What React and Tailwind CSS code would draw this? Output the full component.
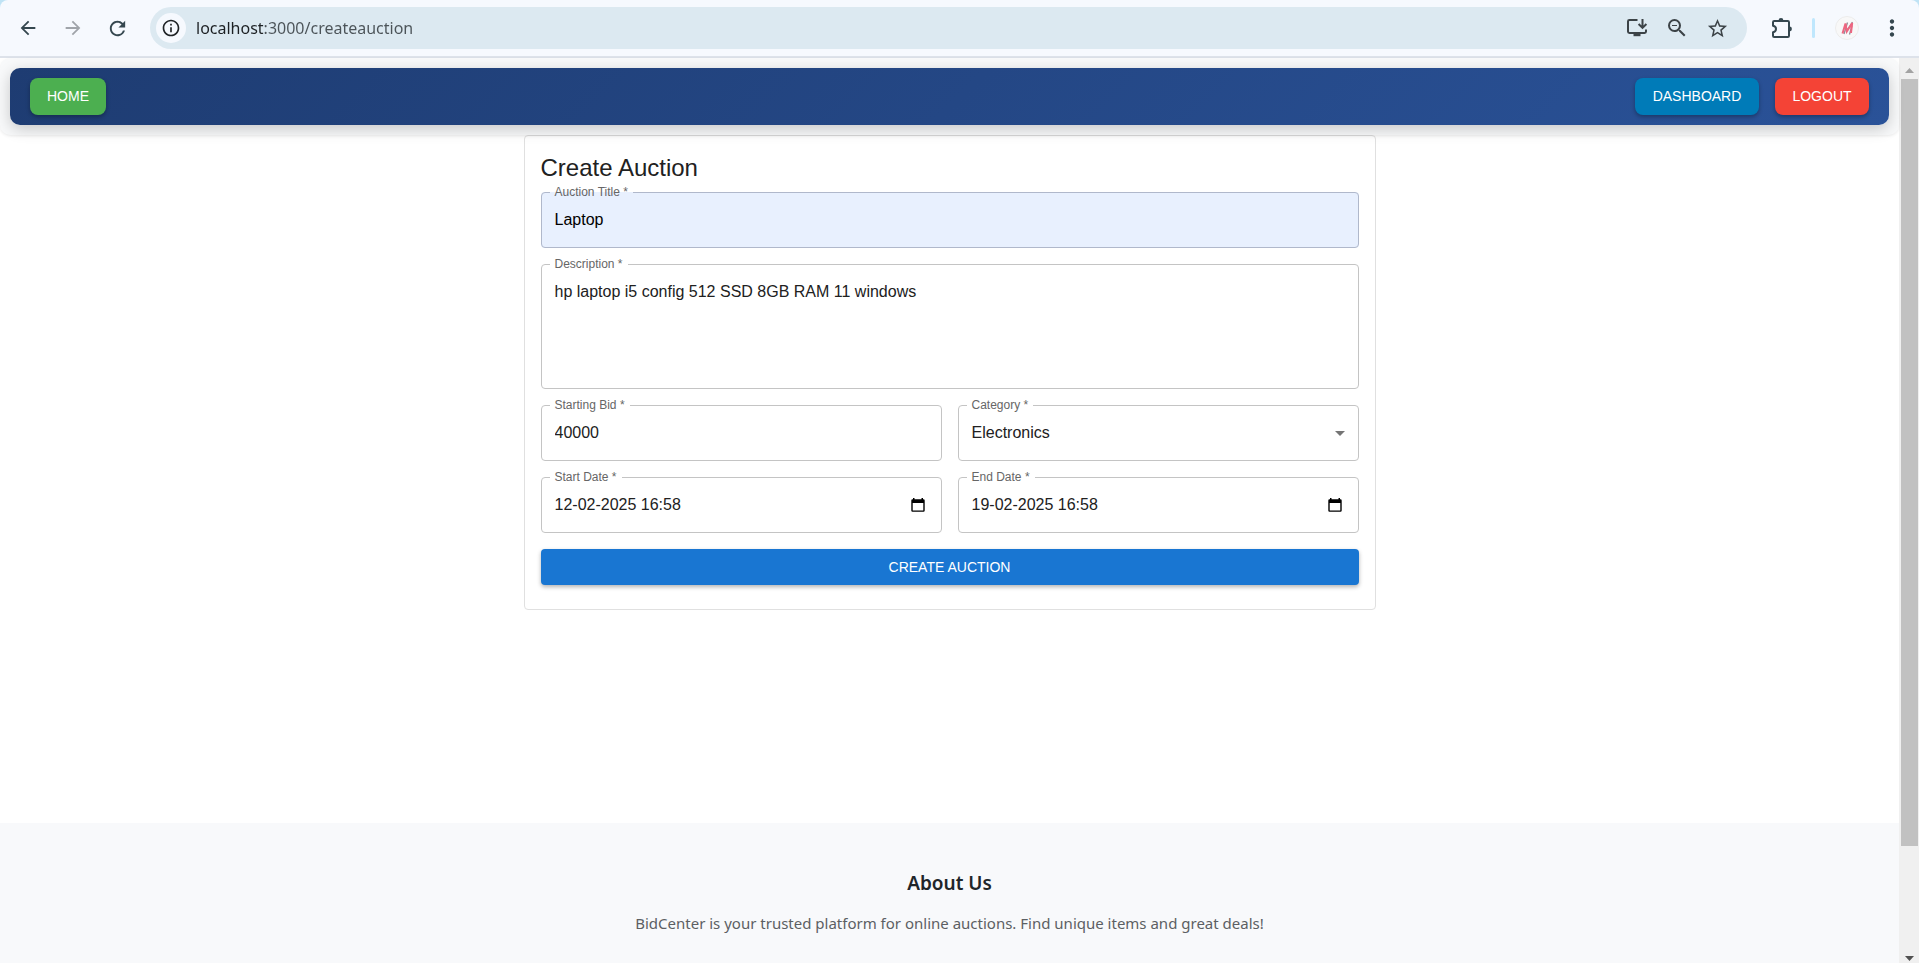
import React from "react";
import {
  MdArrowBack,
  MdArrowForward,
  MdRefresh,
  MdInfoOutline,
  MdZoomOut,
  MdStarBorder,
  MdMoreVert,
} from "react-icons/md";

function InstallIcon() {
  return (
    <svg width="22" height="22" viewBox="0 0 22 22" fill="none" stroke="currentColor" strokeWidth="2" aria-hidden="true">
      <path d="M11.5 3H3.4Q2 3 2 4.4V14.600Q2 16 3.400 16H18.600Q20 16 20 14.600V12.500" />
      <path d="M16.500 2v8.500M12.600 7l3.900 3.900L20.400 7" />
      <path d="M7.500 16h7v3.200h-7z" fill="currentColor" stroke="none" />
    </svg>
  );
}

function PuzzleIcon() {
  return (
    <svg width="24" height="24" viewBox="0 0 24 24" fill="none" stroke="currentColor" strokeWidth="2" strokeLinejoin="round" aria-hidden="true">
      <path d="M4.200 5H17.800Q19 5 19 6.200V19.800Q19 21 17.800 21H4.200Q3 21 3 19.800V16.200C7 15.500 7 10.500 3 9.800V6.200Q3 5 4.200 5Z" />
      <path d="M8.600 4.500a2.400 2.400 0 0 1 4.800 0zM19.500 10.600a2.400 2.400 0 0 1 0 4.800z" fill="currentColor" stroke="none" />
    </svg>
  );
}

function AvatarMark() {
  return (
    <svg width="24" height="24" viewBox="0 0 24 24" fill="none" aria-hidden="true">
      <circle cx="12" cy="12" r="11.500" fill="#f8f8f8" stroke="#ececec" />
      <path d="M9 18l3.500-11.500M11.500 15l6-9M14.500 18.500l2.500-9" stroke="#8f8f98" strokeWidth="1.300" />
      <path d="M7.500 17.500l3-10 1.300 8 5.400-8.500-1.200 10" stroke="#ee6680" strokeWidth="2" />
    </svg>
  );
}

function CalendarIcon() {
  return (
    <svg width="14" height="16" viewBox="0 0 14 16" aria-hidden="true">
      <path
        fillRule="evenodd"
        d="M2 1h1.500v1.200h7V1H12v1.200h.5q1.200 0 1.200 1.200v10.200q0 1.200-1.200 1.200h-11q-1.200 0-1.200-1.200V3.400q0-1.200 1.200-1.200H2zM1.700 6v7.400h10.600V6z"
        fill="#000"
      />
    </svg>
  );
}

function ToolButton({ label, width = "w-[45px]", tone = "text-[#35474f]", children }) {
  return (
    <button type="button" aria-label={label} className={`flex h-10 shrink-0 items-center justify-center ${width} ${tone}`}>
      {children}
    </button>
  );
}

function BrowserBar() {
  return (
    <div className="shrink-0 bg-[#bfe3f5]">
      <div className="flex h-[58px] items-center rounded-t-lg border-b-2 border-[#dde2ea] bg-[#f6f9fe] px-[5px]">
        <ToolButton label="Back"><MdArrowBack size={22} /></ToolButton>
        <ToolButton label="Forward" tone="text-[#a0a4aa]"><MdArrowForward size={22} /></ToolButton>
        <ToolButton label="Reload"><MdRefresh size={23} /></ToolButton>
        <div className="mr-3 ml-2.5 flex h-[42px] min-w-0 flex-1 items-center rounded-full bg-[#dce9f1] pr-2.5 pl-1.5 text-[#3c4347]">
          <button type="button" aria-label="Site information" className="flex size-[30px] shrink-0 items-center justify-center rounded-full bg-[#f6f9fe] text-[#1f2326]">
            <MdInfoOutline size={20} />
          </button>
          <input
            aria-label="Address"
            defaultValue="localhost:3000/createauction"
            className="ml-[10px] block min-w-0 flex-1 bg-linear-to-r from-[#1c2023] from-[68px] to-[#4b5358] to-[68px] bg-clip-text font-['Noto_Sans',sans-serif] text-base leading-6 text-transparent outline-none"
          />
          <ToolButton label="Install app" width="w-10" tone=""><InstallIcon /></ToolButton>
          <ToolButton label="Zoom" width="w-10" tone=""><MdZoomOut size={24} /></ToolButton>
          <ToolButton label="Bookmark" width="w-10" tone=""><MdStarBorder size={23} /></ToolButton>
        </div>
        <ToolButton label="Extensions"><PuzzleIcon /></ToolButton>
        <div className="ml-2 h-5 w-[3px] shrink-0 rounded-full bg-[#bfe7fd]" />
        <button type="button" aria-label="Profile" className="ml-5 shrink-0"><AvatarMark /></button>
        <div className="ml-2.5 flex"><ToolButton label="Menu"><MdMoreVert size={26} /></ToolButton></div>
      </div>
    </div>
  );
}

const navButton =
  "h-[37px] rounded-lg px-4 pb-0.5 text-center text-sm leading-6 font-normal text-white uppercase shadow-[0_2px_4px_rgba(0,0,0,0.3)]";

function Navbar() {
  return (
    <header className="relative rounded-[10px] bg-[#f8f9fa] p-2.5 shadow-[0_1px_3px_rgba(0,0,0,0.08)]">
      <nav className="flex items-center justify-between rounded-[10px] bg-linear-135 from-[#1e3c72] to-[#2a5298] px-5 py-2.5 shadow-[0_4px_15px_rgba(0,0,0,0.2)]">
        <button type="button" className={`${navButton} min-w-[76px] bg-[#4caf50]`}>Home</button>
        <div className="flex gap-4">
          <button type="button" className={`${navButton} min-w-[124px] bg-[#007bb8]`}>Dashboard</button>
          <button type="button" className={`${navButton} min-w-[94px] bg-[#f44336]`}>Logout</button>
        </div>
      </nav>
    </header>
  );
}

function Field({ id, label, filled, children }) {
  return (
    <fieldset className={`min-w-0 rounded border px-2 pb-0 ${filled ? "border-[#b0b8cb] bg-[#e8f0fe]" : "border-[#c4c4c4]"}`}>
      <legend className="px-[5px] text-xs leading-[13px] text-[#666666]">
        <label htmlFor={id} className="block">{label} *</label>
      </legend>
      <div className="flex items-center px-[5px]">{children}</div>
    </fieldset>
  );
}

const control = "block h-12 w-full min-w-0 bg-transparent pb-[6px] text-base leading-6 outline-none";

function DateField({ id, label, value }) {
  return (
    <Field id={id} label={label}>
      <input id={id} defaultValue={value} className={`${control} text-[#212121]`} />
      <button type="button" aria-label={`Pick ${label}`} className="mb-1.5 shrink-0 pr-[3px]">
        <CalendarIcon />
      </button>
    </Field>
  );
}

function AuctionForm() {
  return (
    <form className="rounded border border-[#e0e0e0] bg-white px-4 pt-4 pb-6">
      <h1 className="mb-0.5 text-2xl leading-8 text-[#212121]">Create Auction</h1>
      <div className="flex flex-col gap-2.5">
        <Field id="title" label="Auction Title" filled>
          <input id="title" defaultValue="Laptop" className={`${control} text-black`} />
        </Field>
        <Field id="description" label="Description">
          <textarea
            id="description"
            defaultValue="hp laptop i5 config 512 SSD 8GB RAM 11 windows"
            className="block h-[117px] w-full resize-none bg-transparent pt-[9px] text-base leading-6 text-[#212121] outline-none"
          />
        </Field>
        <div className="grid grid-cols-2 gap-x-4 gap-y-2.5">
          <Field id="bid" label="Starting Bid">
            <input id="bid" defaultValue="40000" className={`${control} text-[#212121]`} />
          </Field>
          <Field id="category" label="Category">
            <select id="category" defaultValue="Electronics" className={`${control} appearance-none text-[#212121]`}>
              <option>Electronics</option>
            </select>
            <svg width="10" height="5" viewBox="0 0 10 5" className="mb-1.5 shrink-0" aria-hidden="true">
              <path d="M0 0h10L5 5z" fill="#757575" />
            </svg>
          </Field>
          <DateField id="start" label="Start Date" value="12-02-2025 16:58" />
          <DateField id="end" label="End Date" value="19-02-2025 16:58" />
        </div>
      </div>
      <button
        type="submit"
        className="mt-4 block h-9 w-full rounded bg-[#1976d2] text-sm leading-6 text-white uppercase shadow-[0_2px_4px_rgba(0,0,0,0.3)]"
      >
        Create Auction
      </button>
    </form>
  );
}

function ScrollTrack() {
  return (
    <div aria-hidden="true" className="flex w-5 shrink-0 flex-col items-center justify-between bg-[#f0f0f0]">
      <div className="flex h-[21px] w-full items-center justify-center">
        <svg width="9" height="5" viewBox="0 0 9 5" className="mt-1"><path d="M0 5h9L4.500 0z" fill="#a3a3a3" /></svg>
      </div>
      <div className="w-[17px] bg-[#c1c1c1]" style={{ height: "84.75%" }} />
      <div className="flex flex-1 items-end pb-0.5">
        <svg width="9" height="5" viewBox="0 0 9 5"><path d="M0 0h9L4.500 5z" fill="#505050" /></svg>
      </div>
    </div>
  );
}

export default function App() {
  return (
    <div className="flex h-screen flex-col overflow-hidden bg-white font-['Liberation_Sans',Arial,sans-serif]">
      <BrowserBar />
      <div className="flex min-h-0 flex-1">
        <div className="flex min-w-0 flex-1 flex-col">
          <Navbar />
          <main className="mx-auto w-full max-w-[900px] px-6">
            <AuctionForm />
          </main>
          <footer className="mt-auto bg-[#f8f9fb] px-6 pt-[46px] pb-7 text-center font-['Noto_Sans',sans-serif]">
            <h2 className="text-[19px] leading-7 font-semibold text-[#212529]">About Us</h2>
            <p className="mt-3.5 text-[15px] leading-6 text-[#5c5f63]">
              BidCenter is your trusted platform for online auctions. Find unique items and great deals!
            </p>
          </footer>
        </div>
        <ScrollTrack />
      </div>
    </div>
  );
}
